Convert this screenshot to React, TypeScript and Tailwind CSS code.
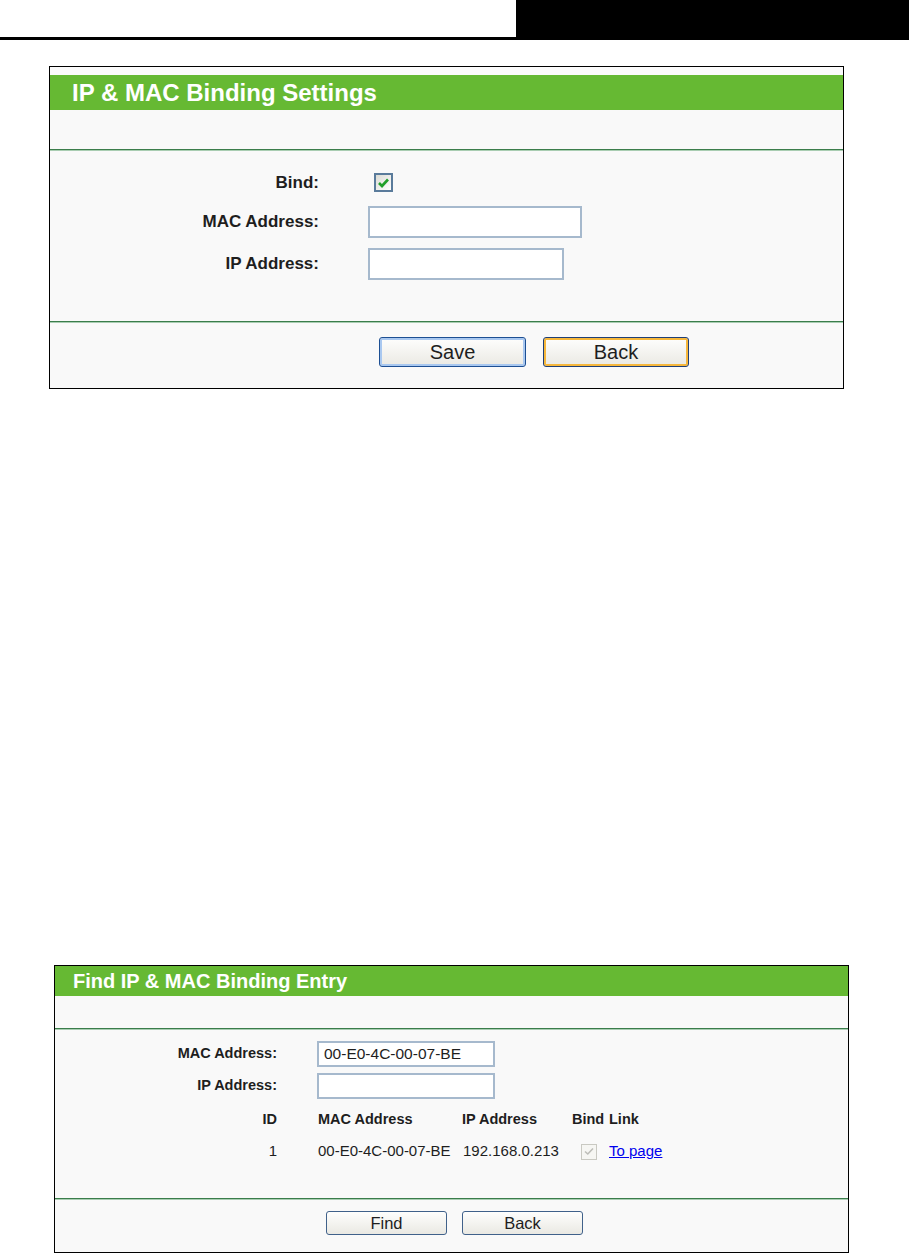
import React from "react";

const font = { fontFamily: '"Liberation Sans", Arial, sans-serif' };

function Line() {
  return (
    <div>
      <div className="h-[1px] bg-[#3b7d4b]" />
      <div className="h-[1px] bg-[#a9cdb2]" />
    </div>
  );
}

function BigCheck() {
  return (
    <div className="w-[19px] h-[19px] border-[2px] border-[#5a7b9b] bg-linear-to-br from-[#dcdcd5] to-white flex items-center justify-center">
      <svg width="11" height="10" viewBox="0 0 11 10">
        <path d="M1 5 L4 8 L10 1.5" fill="none" stroke="#21a02a" strokeWidth="2.6" />
      </svg>
    </div>
  );
}

function SmallCheck() {
  return (
    <div className="w-[16px] h-[16px] border border-[#c9c9c2] bg-[#f6f6f3] flex items-center justify-center">
      <svg width="10" height="9" viewBox="0 0 10 9">
        <path d="M1 4.5 L3.8 7 L9 1.5" fill="none" stroke="#bdbdb8" strokeWidth="1.6" />
      </svg>
    </div>
  );
}

export default function App() {
  return (
    <div className="bg-white w-[909px] min-h-[1253px] text-[#1e1e1e]" style={font}>
      {/* top header */}
      <div className="flex">
        <div className="flex-1 h-[40px] border-b-[3px] border-black" />
        <div className="w-[393px] h-[40px] bg-black" />
      </div>

      {/* Panel 1 */}
      <div className="ml-[49px] mt-[26px] w-[795px] border border-black bg-[#f9f9f9]">
        <div className="h-[8px] bg-[#fbfbfb]" />
        <div className="h-[35px] bg-[#66b933] flex items-center pl-[22px] text-white font-bold text-[24px] leading-none">
          IP &amp; MAC Binding Settings
        </div>
        <div className="h-[39px]" />
        <Line />
        <div className="pt-[22px] pb-[41px]">
          <div className="flex items-center h-[19px]">
            <div className="w-[269px] text-right font-bold text-[17px]">Bind:</div>
            <div className="ml-[55px]">
              <BigCheck />
            </div>
          </div>
          <div className="flex items-center h-[32px] mt-[14px]">
            <div className="w-[269px] text-right font-bold text-[17px]">MAC Address:</div>
            <div className="ml-[49px] w-[214px] h-[32px] border-[2px] border-[#a6b9cd] bg-white" />
          </div>
          <div className="flex items-center h-[32px] mt-[10px]">
            <div className="w-[269px] text-right font-bold text-[17px]">IP Address:</div>
            <div className="ml-[49px] w-[196px] h-[32px] border-[2px] border-[#a6b9cd] bg-white" />
          </div>
        </div>
        <Line />
        <div className="pt-[14px] pb-[21px] pl-[329px] flex gap-[17px]">
          <button className="w-[147px] h-[30px] rounded-[3px] border border-[#1d4f93] shadow-[inset_0_0_0_2px_#a9c8f0] bg-linear-to-b from-[#fefefd] to-[#eae9e3] text-[20px] leading-none text-[#1e1e1e]">
            Save
          </button>
          <button className="w-[146px] h-[30px] rounded-[3px] border border-[#203f76] shadow-[inset_0_0_0_2px_#f6b73c] bg-linear-to-b from-[#fefefd] to-[#eae9e3] text-[20px] leading-none text-[#1e1e1e]">
            Back
          </button>
        </div>
      </div>

      {/* Panel 2 */}
      <div className="ml-[54px] mt-[576px] w-[795px] border border-black bg-[#f9f9f9]">
        <div className="h-[30px] bg-[#66b933] flex items-center pl-[18px] text-white font-bold text-[20px] leading-none">
          Find IP &amp; MAC Binding Entry
        </div>
        <div className="h-[32px]" />
        <Line />
        <div className="pt-[11px] pb-[36px]">
          <div className="flex items-center h-[26px]">
            <div className="w-[222px] text-right font-bold text-[14.5px]">MAC Address:</div>
            <div className="ml-[40px] w-[178px] h-[26px] border-[2px] border-[#a6b9cd] bg-white flex items-center pl-[5px] text-[15.5px]">
              00-E0-4C-00-07-BE
            </div>
          </div>
          <div className="flex items-center h-[26px] mt-[6px]">
            <div className="w-[222px] text-right font-bold text-[14.5px]">IP Address:</div>
            <div className="ml-[40px] w-[178px] h-[26px] border-[2px] border-[#a6b9cd] bg-white" />
          </div>
          <div className="flex items-center h-[20px] mt-[11px] font-bold text-[14.5px]">
            <div className="w-[222px] text-right">ID</div>
            <div className="ml-[41px] w-[144px]">MAC Address</div>
            <div className="w-[110px]">IP Address</div>
            <div className="w-[37px]">Bind</div>
            <div>Link</div>
          </div>
          <div className="flex items-center h-[21px] mt-[11px] text-[15px]">
            <div className="w-[222px] text-right">1</div>
            <div className="ml-[41px] w-[145px]">00-E0-4C-00-07-BE</div>
            <div className="w-[118px]">192.168.0.213</div>
            <div className="w-[28px]">
              <SmallCheck />
            </div>
            <a href="#" className="text-[#0000ee] underline">
              To page
            </a>
          </div>
        </div>
        <Line />
        <div className="pt-[11px] pb-[17px] pl-[271px] flex gap-[15px]">
          <button className="w-[121px] h-[24px] rounded-[3px] border border-[#40618a] bg-linear-to-b from-[#fefefd] to-[#eae9e3] text-[16.5px] leading-none text-[#1e1e1e]">
            Find
          </button>
          <button className="w-[121px] h-[24px] rounded-[3px] border border-[#40618a] bg-linear-to-b from-[#fefefd] to-[#eae9e3] text-[16.5px] leading-none text-[#1e1e1e]">
            Back
          </button>
        </div>
      </div>
    </div>
  );
}
